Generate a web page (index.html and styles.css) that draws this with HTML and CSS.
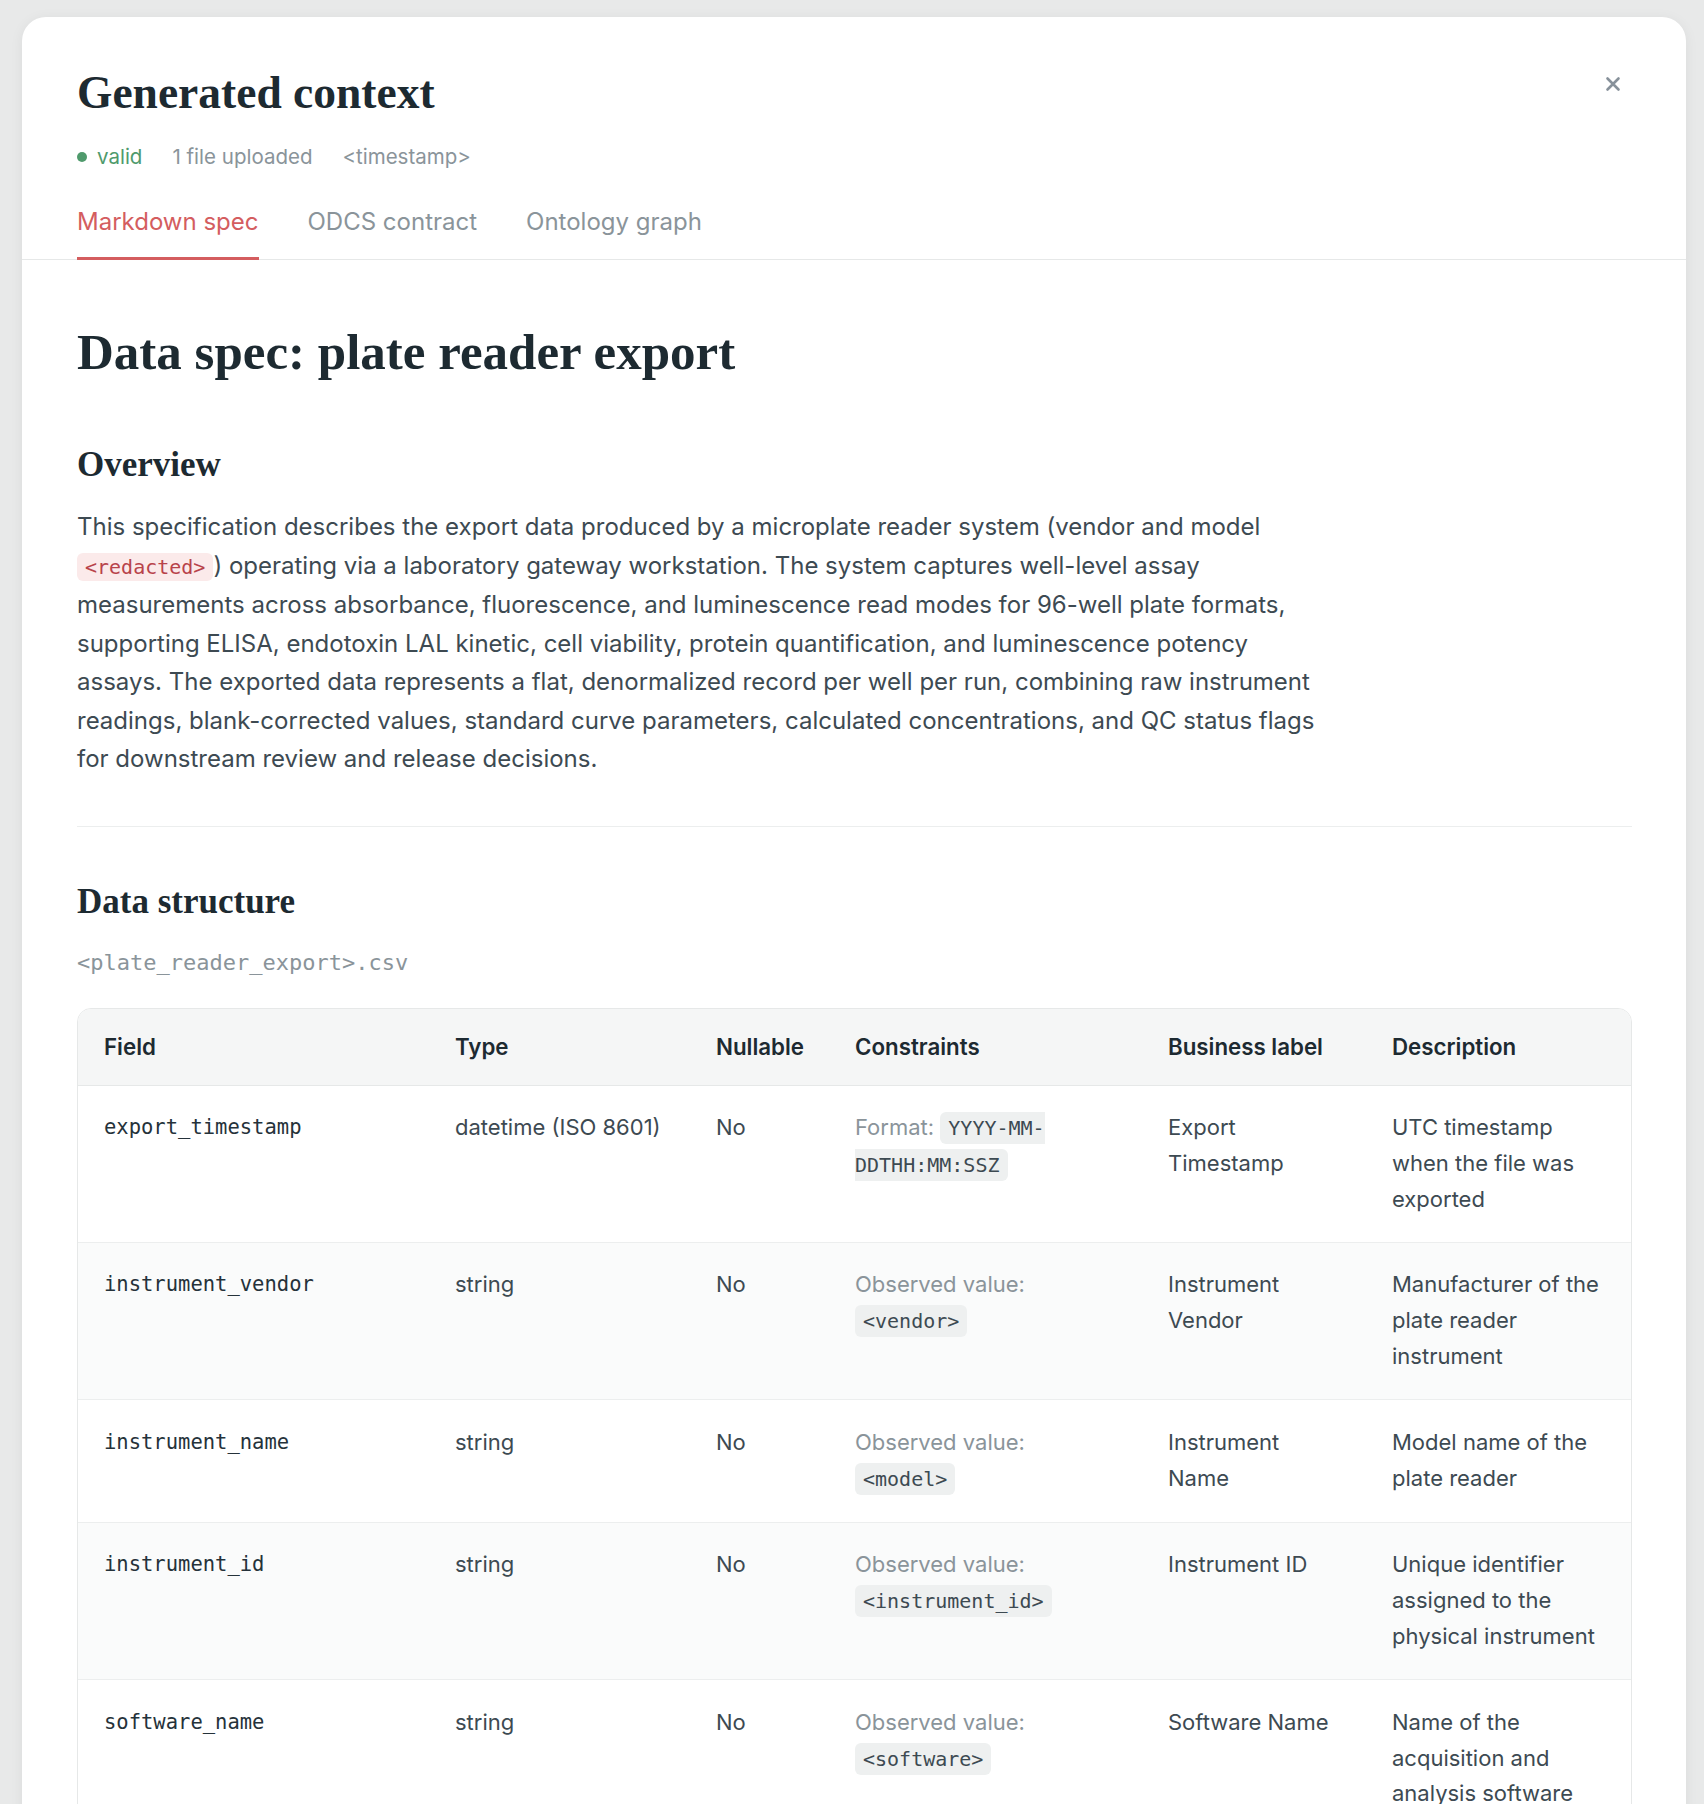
FILE: index.html
```html
<!DOCTYPE html>
<html lang="en">
<head>
    <meta charset="UTF-8">
    <meta name="viewport" content="width=device-width, initial-scale=1.0">
    <title>Generated context</title>
    <link rel="stylesheet" href="styles.css">
</head>
<body>
    <div class="modal">
        <div class="modal-head">
            <h1 class="modal-title">Generated context</h1>
            <div class="meta">
                <span class="status"><span class="dot"></span>valid</span>
                <span>1 file uploaded</span>
                <span>&lt;timestamp&gt;</span>
            </div>
            <div class="tabs">
                <div class="tab active">Markdown spec</div>
                <div class="tab">ODCS contract</div>
                <div class="tab">Ontology graph</div>
            </div>
            <button class="close" aria-label="Close">
                <svg width="16" height="16" viewBox="0 0 16 16">
                    <path d="M2.5 2.5 L13.5 13.5 M13.5 2.5 L2.5 13.5" stroke="#87919a" stroke-width="2.6" stroke-linecap="round"/>
                </svg>
            </button>
        </div>

        <div class="doc">
            <h1 class="doc-title">Data spec: plate reader export</h1>

            <h2>Overview</h2>
            <p class="lead">This specification describes the export data produced by a microplate reader system (vendor and model <code class="redacted">&lt;redacted&gt;</code>) operating via a laboratory gateway workstation. The system captures well-level assay measurements across absorbance, fluorescence, and luminescence read modes for 96-well plate formats, supporting ELISA, endotoxin LAL kinetic, cell viability, protein quantification, and luminescence potency assays. The exported data represents a flat, denormalized record per well per run, combining raw instrument readings, blank-corrected values, standard curve parameters, calculated concentrations, and QC status flags for downstream review and release decisions.</p>

            <hr class="divider">

            <h2>Data structure</h2>
            <div class="filename">&lt;plate_reader_export&gt;.csv</div>

            <div class="table-wrap">
                <table class="fields">
                    <colgroup>
                        <col style="width: 351px">
                        <col style="width: 261px">
                        <col style="width: 139px">
                        <col style="width: 313px">
                        <col style="width: 224px">
                        <col>
                    </colgroup>
                    <thead>
                        <tr>
                            <th>Field</th>
                            <th>Type</th>
                            <th>Nullable</th>
                            <th>Constraints</th>
                            <th>Business label</th>
                            <th>Description</th>
                        </tr>
                    </thead>
                    <tbody>
                        <tr>
                            <td class="field">export_timestamp</td>
                            <td>datetime (ISO 8601)</td>
                            <td>No</td>
                            <td><span class="hint">Format:</span> <code class="chip">YYYY-MM-DDTHH:MM:SSZ</code></td>
                            <td>Export Timestamp</td>
                            <td>UTC timestamp when the file was exported</td>
                        </tr>
                        <tr>
                            <td class="field">instrument_vendor</td>
                            <td>string</td>
                            <td>No</td>
                            <td><span class="hint">Observed value:</span> <code class="chip">&lt;vendor&gt;</code></td>
                            <td>Instrument Vendor</td>
                            <td>Manufacturer of the plate reader instrument</td>
                        </tr>
                        <tr>
                            <td class="field">instrument_name</td>
                            <td>string</td>
                            <td>No</td>
                            <td><span class="hint">Observed value:</span> <code class="chip">&lt;model&gt;</code></td>
                            <td>Instrument Name</td>
                            <td>Model name of the plate reader</td>
                        </tr>
                        <tr>
                            <td class="field">instrument_id</td>
                            <td>string</td>
                            <td>No</td>
                            <td><span class="hint">Observed value:</span> <code class="chip">&lt;instrument_id&gt;</code></td>
                            <td>Instrument ID</td>
                            <td>Unique identifier assigned to the physical instrument</td>
                        </tr>
                        <tr>
                            <td class="field">software_name</td>
                            <td>string</td>
                            <td>No</td>
                            <td><span class="hint">Observed value:</span> <code class="chip">&lt;software&gt;</code></td>
                            <td>Software Name</td>
                            <td>Name of the acquisition and analysis software</td>
                        </tr>
                    </tbody>
                </table>
            </div>
        </div>
    </div>
</body>
</html>
```

FILE: styles.css
```css
body {
    margin: 0;
    background: #e8e9e9;
    font-family: Inter, "Noto Sans", sans-serif;
    color: #3d4a52;
}

.modal {
    margin: 17px 18px 0 22px;
    background: #ffffff;
    border-radius: 24px 24px 0 0;
    box-shadow: 0 2px 14px rgba(0, 0, 0, 0.06);
    padding-bottom: 80px;
}

/* Header with title, meta row and tabs */
.modal-head {
    position: relative;
    padding: 49px 55px 0;
    border-bottom: 1px solid #e6e8e8;
}

.modal-title {
    margin: 0;
    font-family: "Liberation Serif", serif;
    font-weight: bold;
    font-size: 45.5px;
    line-height: 54px;
    color: #1d2a31;
}

.meta {
    display: flex;
    gap: 30px;
    margin-top: 25px;
    font-size: 20.5px;
    line-height: 24px;
    color: #8a949a;
}

.status {
    display: flex;
    align-items: center;
    gap: 10px;
    color: #4f9a6c;
}

.dot {
    width: 10px;
    height: 10px;
    border-radius: 50%;
    background: #4f9a6c;
}

.tabs {
    display: flex;
    gap: 49px;
    margin-top: 38px;
}

.tab {
    font-size: 24px;
    line-height: 30px;
    padding-bottom: 20px;
    color: #8a949a;
    margin-bottom: -1px;
    border-bottom: 3px solid transparent;
}

.tab.active {
    color: #d45d5f;
    border-bottom-color: #d45d5f;
}

.close {
    position: absolute;
    top: 59px;
    right: 65px;
    border: 0;
    background: none;
    padding: 0;
    cursor: pointer;
}

/* Document body */
.doc {
    padding: 62px 54px 0 55px;
}

.doc-title {
    margin: 0;
    font-family: "Liberation Serif", serif;
    font-weight: bold;
    font-size: 51px;
    line-height: 61px;
    color: #1d2a31;
}

.doc h2 {
    margin: 61px 0 0;
    font-family: "Liberation Serif", serif;
    font-weight: bold;
    font-size: 35px;
    line-height: 42px;
    color: #1d2a31;
}

.lead {
    margin: 22px 0 0;
    max-width: 1255px;
    font-size: 24px;
    line-height: 38.5px;
}

code {
    font-family: "DejaVu Sans Mono", "Liberation Mono", monospace;
}

.redacted {
    font-size: 20px;
    color: #b8434a;
    background: #fbeaea;
    border-radius: 6px;
    padding: 2px 8px;
}

.divider {
    border: 0;
    border-top: 1px solid #eceeee;
    margin: 47px 0 0;
}

.doc .divider + h2 {
    margin-top: 54px;
}

.filename {
    margin-top: 25px;
    font-family: "DejaVu Sans Mono", "Liberation Mono", monospace;
    font-size: 22px;
    line-height: 30px;
    color: #8a949a;
}

/* Field table */
.table-wrap {
    margin-top: 30px;
    border: 1px solid #e6e8e8;
    border-radius: 14px;
    overflow: hidden;
}

.fields {
    width: 100%;
    border-collapse: collapse;
    table-layout: fixed;
}

.fields th {
    text-align: left;
    font-size: 22.3px;
    font-weight: 600;
    color: #1d2a31;
    background: #f5f6f6;
    height: 76px;
    padding: 0 26px;
    border-bottom: 1px solid #e6e8e8;
}

.fields td {
    vertical-align: top;
    font-size: 22px;
    line-height: 35.8px;
    padding: 24.5px 26px;
    border-bottom: 1px solid #eceeee;
}

.fields tbody tr:nth-child(even) td {
    background: #fafbfb;
}

.fields td.field {
    font-family: "DejaVu Sans Mono", "Liberation Mono", monospace;
    font-size: 20.5px;
    color: #25323a;
}

.hint {
    color: #8a949a;
}

.chip {
    font-size: 20px;
    color: #3d4a52;
    background: #eef0f0;
    border-radius: 6px;
    padding: 4px 8px;
}
```
